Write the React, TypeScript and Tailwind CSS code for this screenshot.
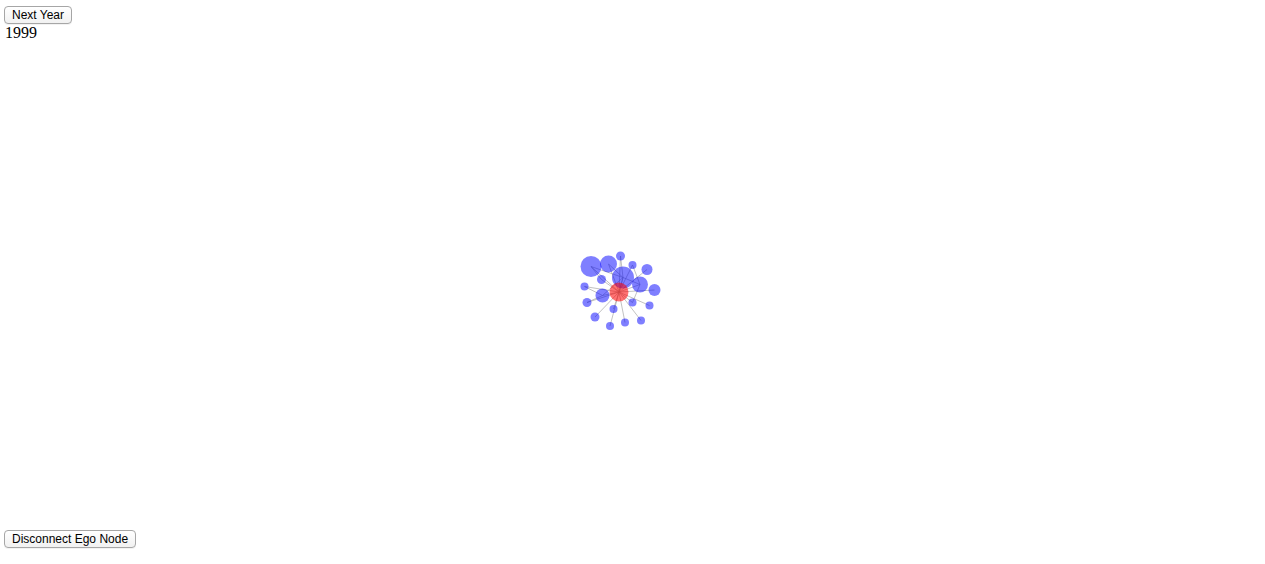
import React from "react";

const OY = 42;
type N = { x: number; y: number; r: number; ego?: boolean };
const nodes: N[] = [
  { x: 591, y: 266.5, r: 10.5 },
  { x: 608.5, y: 264, r: 8.5 },
  { x: 620.5, y: 256, r: 4.5 },
  { x: 632.5, y: 265, r: 4 },
  { x: 647, y: 269.5, r: 5.5 },
  { x: 623, y: 277.5, r: 11 },
  { x: 640, y: 284.5, r: 8 },
  { x: 654.5, y: 290, r: 6 },
  { x: 601.5, y: 279.5, r: 4.5 },
  { x: 584.5, y: 286.5, r: 4 },
  { x: 602.5, y: 295.5, r: 7 },
  { x: 587, y: 302.5, r: 4.5 },
  { x: 613.5, y: 309, r: 4 },
  { x: 632.5, y: 302.5, r: 4 },
  { x: 649.5, y: 305.5, r: 4 },
  { x: 595, y: 317, r: 4.5 },
  { x: 625, y: 322.5, r: 4 },
  { x: 641, y: 320.5, r: 4 },
  { x: 610, y: 326, r: 4 },
];
const ego: N = { x: 619, y: 292, r: 9.5, ego: true };
const hub = nodes[5];
const extra: [number, number][] = [
  [0, 5], [1, 5], [2, 5], [6, 5], [10, 11], [10, 5], [9, 10], [3, 6], [0, 8], [13, 6],
];

export default function App() {
  const btn =
    "h-[18px] rounded-[4px] border border-[#a6a6a6] bg-gradient-to-b from-white to-[#f1f1f1] px-[7px] text-[12px] leading-[16px] text-black shadow-[0_1px_0_rgba(0,0,0,0.05)] w-fit";
  return (
    <div className="flex w-[1265px] h-[564px] flex-col bg-white" style={{ fontFamily: "'Liberation Sans', Arial, sans-serif" }}>
      <button className={`${btn} ml-[4px] mt-[6px]`}>Next Year</button>
      <div className="ml-[5px] h-[18px] text-[16px] leading-[18px] text-black" style={{ fontFamily: "'Liberation Serif', 'Times New Roman', serif" }}>
        1999
      </div>
      <svg width={1265} height={488} className="block">
        <g stroke="#999" strokeOpacity={0.6} strokeWidth={1}>
          {nodes.map((n, i) => (
            <line key={"e" + i} x1={ego.x} y1={ego.y - OY} x2={n.x} y2={n.y - OY} />
          ))}
          {extra.map(([a, b], i) => (
            <line key={"x" + i} x1={nodes[a].x} y1={nodes[a].y - OY} x2={nodes[b].x} y2={nodes[b].y - OY} />
          ))}
          <line x1={hub.x} y1={hub.y - OY} x2={ego.x} y2={ego.y - OY} />
        </g>
        {nodes.map((n, i) => (
          <circle key={i} cx={n.x} cy={n.y - OY} r={n.r} fill="#0000ff" fillOpacity={0.5} />
        ))}
        <circle cx={ego.x} cy={ego.y - OY} r={ego.r} fill="#ff0000" fillOpacity={0.55} />
      </svg>
      <button className={`${btn} ml-[4px]`}>Disconnect Ego Node</button>
    </div>
  );
}
